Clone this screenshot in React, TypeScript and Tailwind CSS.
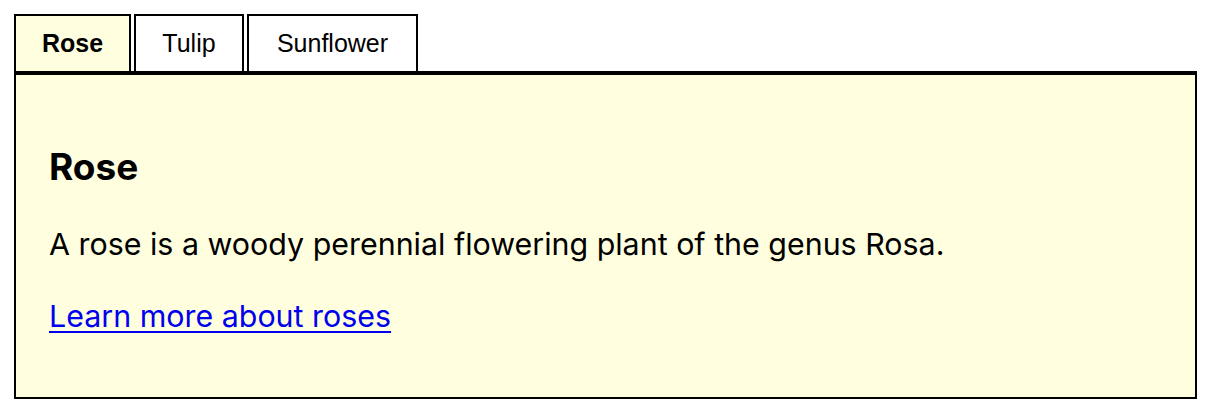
import { useState } from "react";

const flowers = [
  {
    id: "rose",
    label: "Rose",
    width: "w-[117px]",
    title: "Rose",
    text: "A rose is a woody perennial flowering plant of the genus Rosa.",
    link: "Learn more about roses",
  },
  {
    id: "tulip",
    label: "Tulip",
    width: "w-[110px]",
    title: "Tulip",
    text: "Tulips are spring-blooming perennial herbaceous bulbiferous geophytes.",
    link: "Learn more about tulips",
  },
  {
    id: "sunflower",
    label: "Sunflower",
    width: "w-[171px]",
    title: "Sunflower",
    text: "The common sunflower is a species of large annual forb of the daisy family.",
    link: "Learn more about sunflowers",
  },
];

export default function App() {
  const [active, setActive] = useState("rose");
  const current = flowers.find((f) => f.id === active)!;

  return (
    <div className="p-[14px] bg-white min-h-screen">
      <div role="tablist" className="flex gap-[3px]">
        {flowers.map((f) => (
          <button
            key={f.id}
            role="tab"
            aria-selected={active === f.id}
            onClick={() => setActive(f.id)}
            className={`${f.width} h-[57px] border-2 border-b-0 border-black text-center text-[25px] text-black font-['Liberation_Sans',Arial,sans-serif] cursor-pointer ${
              active === f.id ? "bg-[#ffffe0] font-bold" : "bg-white"
            }`}
          >
            {f.label}
          </button>
        ))}
      </div>

      <div
        role="tabpanel"
        className="border-2 border-t-4 border-black bg-[#ffffe0] px-[33px] pt-[70px] pb-[63px] font-['Inter',sans-serif] text-black"
      >
        <h2 className="text-[37px] leading-[44px] font-bold">{current.title}</h2>
        <p className="mt-[37px] text-[30.4px] leading-[36px]">{current.text}</p>
        <p className="mt-[36px] text-[30.4px] leading-[36px]">
          <a
            href="#"
            className="text-[#0000ee] underline decoration-2 underline-offset-[4px]"
          >
            {current.link}
          </a>
        </p>
      </div>
    </div>
  );
}
